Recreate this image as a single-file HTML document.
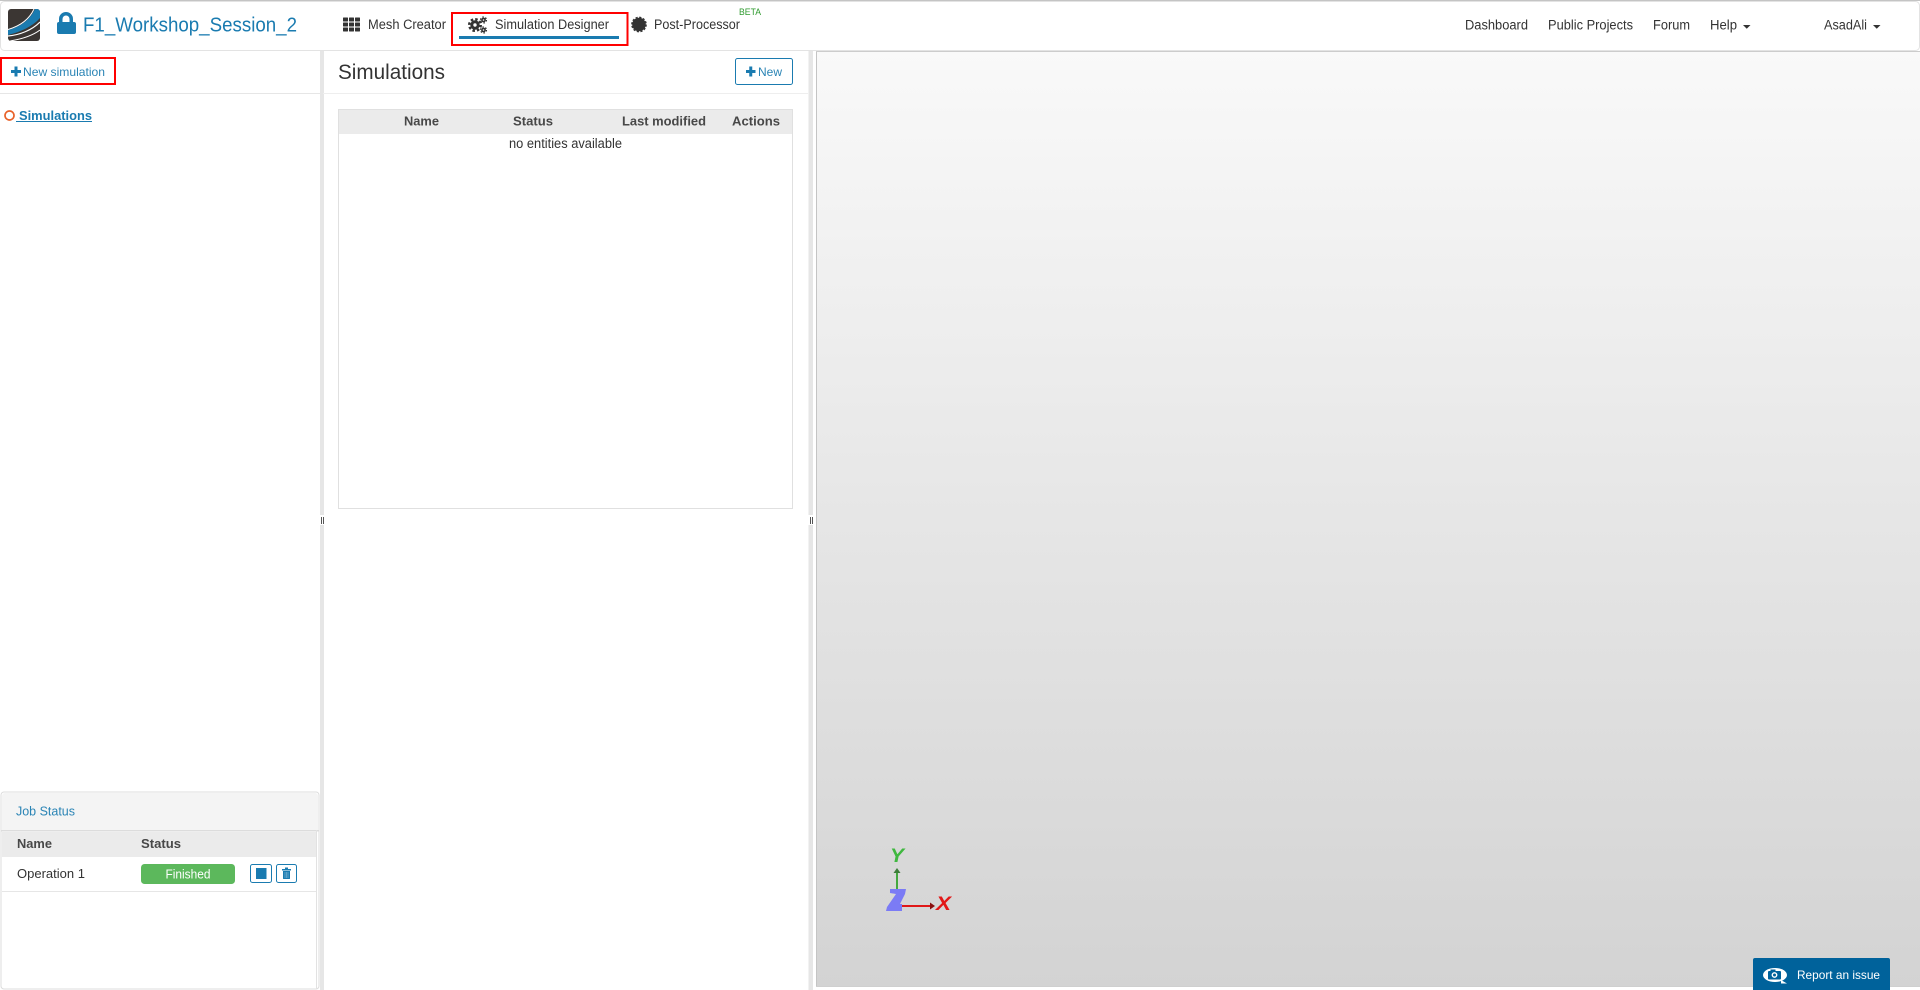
<!DOCTYPE html>
<html lang="en">
<head>
<meta charset="utf-8">
<title>Simulation Designer</title>
<style>
html,body{margin:0;padding:0;width:1920px;height:990px;overflow:hidden;background:#fff}
svg{display:block;position:absolute;left:0;top:0}
text{font-family:"Liberation Sans",sans-serif;white-space:pre}
</style>
</head>
<body>
<svg width="1920" height="990" viewBox="0 0 1920 990" xmlns="http://www.w3.org/2000/svg">
<defs>
<linearGradient id="vg" x1="0" y1="0" x2="0" y2="1"><stop offset="0" stop-color="#f9f9f9"/><stop offset="1" stop-color="#d3d3d3"/></linearGradient>
<clipPath id="lc"><rect x="8" y="9" width="32" height="32" rx="3"/></clipPath>
</defs>

<!-- top bar -->
<rect x="0" y="0" width="1920" height="1" fill="#c4c4c4"/>
<rect x="0.5" y="1.5" width="1919" height="49" rx="4" fill="#fff" stroke="#e3e3e3"/>

<!-- logo -->
<g clip-path="url(#lc)">
<rect x="8" y="9" width="32" height="32" fill="#3b3633"/>
<path d="M8 30C20 27 30 20 35 9L40 9L40 18C32 27 20 32 8 35Z" fill="#1a7bb0"/>
<path d="M8 29.500C20 26 29 20 34 9" fill="none" stroke="#fff" stroke-width="1"/>
<path d="M8 36C20 35 32 30 40 22" fill="none" stroke="#fff" stroke-width="1.200"/>
<path d="M10 41C22 39 32 36 40 30" fill="none" stroke="#fff" stroke-width="1"/>
</g>

<!-- lock -->
<path d="M60.750 23V19a5.250 5.250 0 0 1 10.500 0V23" fill="none" stroke="#1a7bb0" stroke-width="3.500"/>
<rect x="57" y="22" width="19" height="12" rx="2" fill="#1a7bb0"/>
<text x="83" y="31.500" font-size="20" fill="#1a7bb0" textLength="214" lengthAdjust="spacingAndGlyphs">F1_Workshop_Session_2</text>

<!-- mesh icon -->
<g fill="#333">
<rect x="343" y="17.500" width="5" height="4" rx=".5"/><rect x="349" y="17.500" width="5" height="4" rx=".5"/><rect x="355" y="17.500" width="5" height="4" rx=".5"/>
<rect x="343" y="22.500" width="5" height="4" rx=".5"/><rect x="349" y="22.500" width="5" height="4" rx=".5"/><rect x="355" y="22.500" width="5" height="4" rx=".5"/>
<rect x="343" y="27.500" width="5" height="4" rx=".5"/><rect x="349" y="27.500" width="5" height="4" rx=".5"/><rect x="355" y="27.500" width="5" height="4" rx=".5"/>
</g>
<text x="368" y="29" font-size="13.5" fill="#333" textLength="78" lengthAdjust="spacingAndGlyphs">Mesh Creator</text>

<!-- active nav -->
<rect x="452" y="13" width="175.500" height="32" fill="none" stroke="#f00" stroke-width="2"/>
<rect x="459" y="36" width="160" height="3" fill="#1a7bb0"/>
<g fill="none" stroke="#333">
<circle cx="475" cy="25" r="3.200" stroke-width="3"/>
<circle cx="475" cy="25" r="5.800" stroke-width="2.400" stroke-dasharray="2.500 2.060"/>
<circle cx="483.500" cy="20" r="1.600" stroke-width="1.600"/>
<circle cx="483.500" cy="20" r="3" stroke-width="1.200" stroke-dasharray="1.500 1.640"/>
<circle cx="483.500" cy="30" r="1.600" stroke-width="1.600"/>
<circle cx="483.500" cy="30" r="3" stroke-width="1.200" stroke-dasharray="1.500 1.640"/>
</g>
<text x="495" y="29" font-size="13.5" fill="#333" textLength="114" lengthAdjust="spacingAndGlyphs">Simulation Designer</text>

<!-- post processor -->
<circle cx="639" cy="24.500" r="6.800" fill="#333"/>
<circle cx="639" cy="24.500" r="7.200" fill="none" stroke="#333" stroke-width="1.300" stroke-dasharray="2.200 1.570"/>
<text x="654" y="29" font-size="13.5" fill="#333" textLength="86" lengthAdjust="spacingAndGlyphs">Post-Processor</text>
<text x="739" y="15" font-size="9.5" fill="#2e9a2e" textLength="22" lengthAdjust="spacingAndGlyphs">BETA</text>

<!-- right nav -->
<text x="1465" y="29.500" font-size="13.5" fill="#333" textLength="63" lengthAdjust="spacingAndGlyphs">Dashboard</text>
<text x="1548" y="29.500" font-size="13.5" fill="#333" textLength="85" lengthAdjust="spacingAndGlyphs">Public Projects</text>
<text x="1653" y="29.500" font-size="13.5" fill="#333" textLength="37" lengthAdjust="spacingAndGlyphs">Forum</text>
<text x="1710" y="29.500" font-size="13.5" fill="#333" textLength="27" lengthAdjust="spacingAndGlyphs">Help</text>
<path d="M1743 25h7.500l-3.750 3.750z" fill="#333"/>
<text x="1824" y="29.500" font-size="13.5" fill="#333" textLength="43" lengthAdjust="spacingAndGlyphs">AsadAli</text>
<path d="M1873 25h7.500l-3.750 3.750z" fill="#333"/>

<!-- splitters -->
<rect x="320" y="51" width="4" height="939" fill="#e6e6e6"/>
<rect x="808.500" y="51" width="4.500" height="939" fill="#e6e6e6"/>
<rect x="320" y="515" width="4" height="10" fill="#fff"/>
<rect x="808.500" y="515" width="4.500" height="10" fill="#fff"/>
<rect x="321" y="517" width="1" height="7" fill="#555"/><rect x="323" y="517" width="1" height="7" fill="#555"/>
<rect x="810" y="517" width="1" height="7" fill="#555"/><rect x="812" y="517" width="1" height="7" fill="#555"/>

<!-- viewer -->
<rect x="816" y="51" width="1104" height="936" fill="url(#vg)"/>
<rect x="816" y="51" width="1" height="936" fill="#c4c4c4"/>
<rect x="816" y="51" width="1104" height="1" fill="#cccccc"/>
<rect x="816" y="986" width="1104" height="1" fill="#cfcfcf"/>

<!-- left panel -->
<rect x="1" y="58" width="114" height="26" fill="none" stroke="#f00" stroke-width="2"/>
<path d="M11 71.500h10M16 66.500v10" stroke="#1a7bb0" stroke-width="3" fill="none"/>
<text x="23" y="76" font-size="12" fill="#2a84b5" textLength="82" lengthAdjust="spacingAndGlyphs">New simulation</text>
<rect x="0" y="93" width="320" height="1" fill="#e6e6e6"/>
<circle cx="9.500" cy="115.500" r="4.500" fill="none" stroke="#e8622a" stroke-width="1.700"/>
<text x="19" y="120" font-size="13" font-weight="700" fill="#1a7bb0" textLength="73" lengthAdjust="spacingAndGlyphs">Simulations</text>
<rect x="16" y="121" width="76" height="1" fill="#1a7bb0"/>

<!-- center panel -->
<text x="338" y="79" font-size="21" fill="#333" textLength="107" lengthAdjust="spacingAndGlyphs">Simulations</text>
<rect x="735.500" y="58.500" width="57" height="26" rx="2" fill="#fff" stroke="#1a7bb0"/>
<path d="M746 71.500h9.500M750.750 66.500v10" stroke="#1a7bb0" stroke-width="3" fill="none"/>
<text x="758" y="76" font-size="12" fill="#2a84b5" textLength="24" lengthAdjust="spacingAndGlyphs">New</text>
<rect x="323" y="93" width="485" height="1" fill="#eee"/>
<rect x="338.500" y="109.500" width="454" height="399" fill="#fff" stroke="#e0e0e0"/>
<rect x="339" y="110" width="453" height="24" fill="#ebebeb"/>
<g font-size="13" font-weight="700" fill="#484848">
<text x="404" y="125.500" textLength="35" lengthAdjust="spacingAndGlyphs">Name</text>
<text x="513" y="125.500" textLength="40" lengthAdjust="spacingAndGlyphs">Status</text>
<text x="622" y="125.500" textLength="84" lengthAdjust="spacingAndGlyphs">Last modified</text>
<text x="732" y="125.500" textLength="48" lengthAdjust="spacingAndGlyphs">Actions</text>
</g>
<text x="509" y="148" font-size="13.5" fill="#333" textLength="113" lengthAdjust="spacingAndGlyphs">no entities available</text>

<!-- job status -->
<rect x="1" y="792" width="318" height="197" rx="3" fill="#fff" stroke="#dcdcdc"/>
<path d="M2 830V796a3 3 0 0 1 3-3h310a3 3 0 0 1 3 3v34z" fill="#f4f4f4"/>
<rect x="1" y="830" width="318" height="1.500" fill="#dcdcdc"/>
<rect x="316" y="830" width="1" height="159" fill="#e2e2e2"/>
<text x="16" y="815.500" font-size="13" fill="#2a84b5" textLength="59" lengthAdjust="spacingAndGlyphs">Job Status</text>
<rect x="2" y="832" width="314" height="25" fill="#ebebeb"/>
<text x="17" y="848" font-size="13" font-weight="700" fill="#484848" textLength="35" lengthAdjust="spacingAndGlyphs">Name</text>
<text x="141" y="848" font-size="13" font-weight="700" fill="#484848" textLength="40" lengthAdjust="spacingAndGlyphs">Status</text>
<text x="17" y="878" font-size="13" fill="#333" textLength="68" lengthAdjust="spacingAndGlyphs">Operation 1</text>
<rect x="141" y="864" width="94" height="20" rx="3.500" fill="#5cb85c"/>
<text x="165.500" y="878.500" font-size="12.500" fill="#fff" textLength="45" lengthAdjust="spacingAndGlyphs">Finished</text>
<rect x="250.500" y="864.500" width="21" height="18" rx="2" fill="#fff" stroke="#1a7bb0"/>
<rect x="256" y="868" width="10.500" height="11" fill="#1a7bb0"/>
<rect x="276.500" y="864.500" width="20" height="18" rx="2" fill="#fff" stroke="#1a7bb0"/>
<path d="M282 869h9v1.500h-9zM285 867.500h3v1.500h-3z" fill="#1a7bb0"/>
<path d="M283 871h7v7.500a.5.5 0 0 1-.5.5h-6a.5.5 0 0 1-.5-.5z" fill="#1a7bb0"/>
<path d="M285 872v6M286.500 872v6M288 872v6" stroke="#9cc8e0" stroke-width=".5"/>
<rect x="2" y="891" width="314" height="1" fill="#e6e6e6"/>

<!-- axes -->
<rect x="896" y="873" width="2" height="32" fill="#43a83e"/>
<path d="M897 868l3.500 5h-7z" fill="#3d7d3a"/>
<path d="M901 906h30" stroke="#e01818" stroke-width="2"/>
<path d="M935 906l-5-3.500v7z" fill="#8a1010"/>
<path d="M890 889H906L905 894L900 904H902V911H886L887 907L896 894L890 893Z" fill="#7b7bf5"/>
<text x="890" y="862" font-size="19" font-weight="700" font-style="italic" fill="#3fb83f" textLength="14" lengthAdjust="spacingAndGlyphs">Y</text>
<text x="936" y="910" font-size="19" font-weight="700" font-style="italic" fill="#e21818" textLength="15" lengthAdjust="spacingAndGlyphs">X</text>

<!-- report -->
<path d="M1753 990V960a2 2 0 0 1 2-2h133a2 2 0 0 1 2 2v30z" fill="#00629b"/>
<ellipse cx="1775" cy="975" rx="12" ry="7" fill="#fff"/>
<path d="M1781 980l6 3.500-6 0z" fill="#fff"/>
<rect x="1768" y="971" width="13" height="8.500" rx="1" fill="#00629b"/>
<rect x="1770.500" y="969.500" width="5" height="2" fill="#00629b"/>
<circle cx="1774.500" cy="975" r="2.900" fill="#fff"/>
<circle cx="1774.500" cy="975" r="1.500" fill="#00629b"/>
<text x="1797" y="979" font-size="12" fill="#fff" textLength="83" lengthAdjust="spacingAndGlyphs">Report an issue</text>
</svg>
</body>
</html>
